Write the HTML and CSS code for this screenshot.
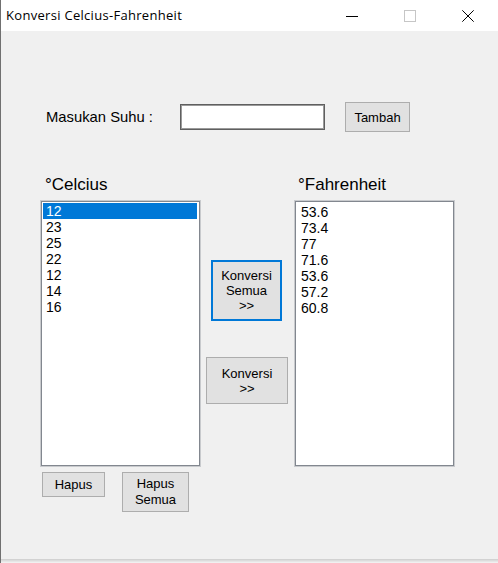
FILE: index.html
```html
<!DOCTYPE html>
<html>
<head>
<meta charset="utf-8">
<title>Konversi Celcius-Fahrenheit</title>
<link rel="stylesheet" href="styles.css">
</head>
<body>
<div class="window">
  <div class="titlebar">
    <div class="title">Konversi Celcius-Fahrenheit</div>
    <div class="caption-buttons">
      <div class="cap-btn">
        <svg width="12" height="12" viewBox="0 0 12 12"><line x1="0" y1="6.5" x2="12" y2="6.5" stroke="#000" stroke-width="1"/></svg>
      </div>
      <div class="cap-btn">
        <svg width="12" height="12" viewBox="0 0 12 12"><rect x="0.5" y="0.5" width="11" height="11" fill="none" stroke="#c6c6c6" stroke-width="1"/></svg>
      </div>
      <div class="cap-btn">
        <svg width="12" height="12" viewBox="0 0 12 12"><line x1="0.3" y1="0.3" x2="11.7" y2="11.7" stroke="#000" stroke-width="1"/><line x1="11.7" y1="0.3" x2="0.3" y2="11.7" stroke="#000" stroke-width="1"/></svg>
      </div>
    </div>
  </div>
  <div class="client">
    <div class="input-row">
      <span class="label">Masukan Suhu :</span>
      <div class="textbox"></div>
      <div class="btn btn-tambah">Tambah</div>
    </div>
    <div class="panels">
      <div class="col-label col-label-c">°Celcius</div>
      <div></div>
      <div class="col-label col-label-f">°Fahrenheit</div>

      <div class="listbox">
        <div class="item selected">12</div>
        <div class="item">23</div>
        <div class="item">25</div>
        <div class="item">22</div>
        <div class="item">12</div>
        <div class="item">14</div>
        <div class="item">16</div>
      </div>
      <div class="middle">
        <div class="btn btn-semua">Konversi<br>Semua<br>&gt;&gt;</div>
        <div class="btn btn-konversi">Konversi<br>&gt;&gt;</div>
      </div>
      <div class="listbox listbox-f">
        <div class="item">53.6</div>
        <div class="item">73.4</div>
        <div class="item">77</div>
        <div class="item">71.6</div>
        <div class="item">53.6</div>
        <div class="item">57.2</div>
        <div class="item">60.8</div>
      </div>

      <div class="bottom-row">
        <div class="btn btn-hapus">Hapus</div>
        <div class="btn btn-hapus-semua">Hapus<br>Semua</div>
      </div>
    </div>
  </div>
</div>
</body>
</html>
```

FILE: styles.css
```css
html, body {
  margin: 0;
  padding: 0;
  background: #ffffff;
}

.window {
  width: 498px;
  height: 563px;
  box-sizing: border-box;
  display: flex;
  flex-direction: column;
  border-left: 1px solid #707070;
  background: #f0f0f0;
}

.titlebar {
  height: 31px;
  flex: none;
  background: #ffffff;
  display: flex;
  align-items: center;
  justify-content: space-between;
}

.title {
  font-family: "Open Sans", "Noto Sans", sans-serif;
  font-size: 13px;
  letter-spacing: 0.3px;
  color: #000;
  padding-left: 5px;
  padding-bottom: 1px;
}

.caption-buttons {
  display: flex;
  height: 31px;
  padding-right: 1px;
}

.cap-btn {
  width: 58px;
  height: 31px;
  display: flex;
  align-items: center;
  justify-content: center;
}

.client {
  height: 528px;
  flex: none;
  background: #f0f0f0;
  border-bottom: 1px solid #d2d2d2;
  box-shadow: 0 1px 0 #dcdcdc, 0 2px 0 #e6e6e6;
  font-family: "Liberation Sans", Arial, sans-serif;
  color: #000;
}

.input-row {
  display: flex;
  align-items: center;
  height: 30px;
  margin-top: 71px;
  padding-left: 45px;
}

.label {
  width: 134px;
  font-size: 14.8px;
  flex: none;
}

.textbox {
  width: 145px;
  height: 26px;
  box-sizing: border-box;
  background: #fff;
  border: 1px solid #5f5f5f;
  box-shadow: inset 0 0 0 1px #9a9a9a;
  flex: none;
}

.btn {
  box-sizing: border-box;
  background: #e1e1e1;
  border: 1px solid #adadad;
  font-size: 13px;
  line-height: 15px;
  text-align: center;
  display: flex;
  align-items: center;
  justify-content: center;
  flex: none;
}

.btn-tambah {
  width: 65px;
  height: 30px;
  margin-left: 20px;
}

.panels {
  display: grid;
  grid-template-columns: 159px 95px 159px;
  margin-left: 40px;
  margin-top: 44px;
}

.col-label {
  font-size: 17px;
  line-height: 18px;
  height: 18px;
  margin-bottom: 7px;
}

.col-label-c { padding-left: 4px; }
.col-label-f { padding-left: 3px; }

.listbox {
  height: 265px;
  box-sizing: border-box;
  background: #fff;
  border: 1px solid #82878f;
  box-shadow: 0 0 0 1px #c8cacd;
  padding: 1px 2px 1px 1px;
}

.item {
  font-size: 14px;
  line-height: 16px;
  height: 16px;
  padding-left: 3px;
  color: #000;
}

.item.selected {
  background: #0078d7;
  color: #fff;
}

.listbox-f {
  padding-top: 2px;
  padding-left: 1px;
}

.listbox-f .item {
  padding-left: 4px;
}

.middle {
  display: flex;
  flex-direction: column;
  align-items: flex-start;
}

.btn-semua {
  width: 71px;
  height: 61px;
  margin-top: 59px;
  margin-left: 11px;
  border: 2px solid #0078d7;
}

.btn-konversi {
  width: 82px;
  height: 47px;
  margin-top: 36px;
  margin-left: 6px;
}

.bottom-row {
  grid-column: 1;
  display: flex;
  align-items: flex-start;
  margin-top: 6px;
  padding-left: 1px;
  gap: 17px;
}

.btn-hapus {
  width: 63px;
  height: 25px;
  line-height: 16px;
}

.btn-hapus-semua {
  width: 67px;
  height: 40px;
  line-height: 16px;
}
```
